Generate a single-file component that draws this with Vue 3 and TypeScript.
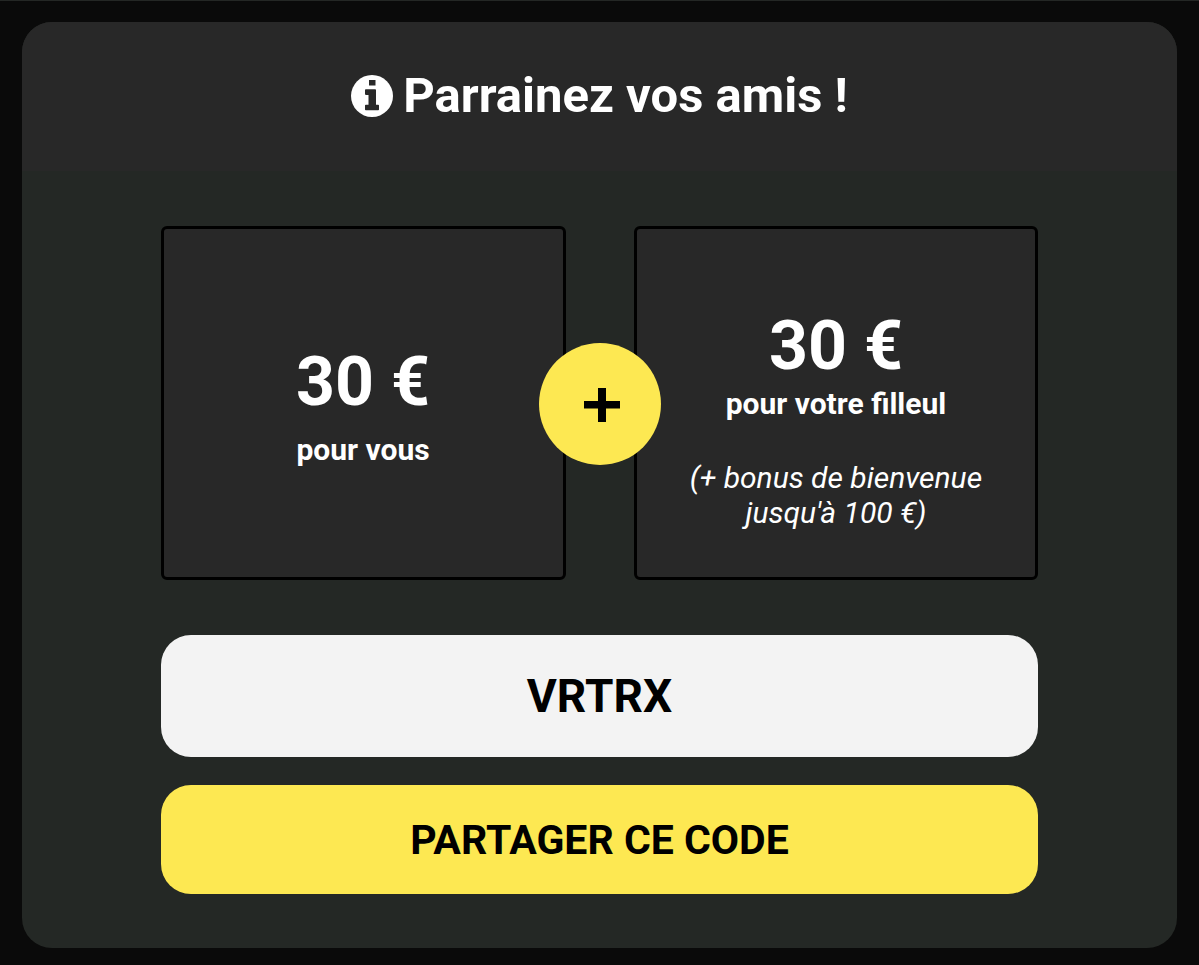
<script setup lang="ts">
import { ref } from 'vue'

const code = ref<string>('VRTRX')
const shared = ref<boolean>(false)

async function shareCode(): Promise<void> {
  if (navigator.share) {
    await navigator.share({ text: code.value }).catch(() => undefined)
    shared.value = true
  }
}
</script>

<template>
  <main class="page">
    <section class="card" aria-labelledby="referral-title">
      <header class="card-header">
        <svg class="info" viewBox="0 0 42 42" aria-hidden="true">
          <circle cx="21" cy="21" r="21" fill="#fff" />
          <path
            d="M18 5h6.500v5.500H18zM14.800 14.300h9.400a.8.8 0 0 1 .8.8v14.700h2.200a.8.8 0 0 1 .8.8v3.800a.8.8 0 0 1-.8.8H14.800a.8.8 0 0 1-.8-.8v-3.800a.8.8 0 0 1 .8-.8h2.700v-9.900h-2.700a.8.8 0 0 1-.8-.8v-4a.8.8 0 0 1 .8-.8z"
            fill="#282828"
          />
        </svg>
        <h1 id="referral-title">Parrainez vos amis !</h1>
      </header>

      <div class="card-body">
        <div class="rewards">
          <article class="reward reward-self">
            <p class="amount">30 €</p>
            <p class="who">pour vous</p>
          </article>
          <article class="reward reward-friend">
            <p class="amount">30 €</p>
            <p class="who">pour votre filleul</p>
            <p class="bonus">(+ bonus de bienvenue jusqu'à 100 €)</p>
          </article>
          <div class="plus">
            <svg viewBox="0 0 122 122" role="img" aria-label="plus">
              <path d="M59 45h8v13h14v7.500H67V79h-8V65.500H45V58h14z" fill="#000" />
            </svg>
          </div>
        </div>

        <input class="code" type="text" :value="code" readonly aria-label="Code de parrainage" />
        <button class="share" type="button" @click="shareCode">PARTAGER CE CODE</button>
      </div>
    </section>
  </main>
</template>

<style>
body {
  background: #0a0a0a;
}
</style>

<style scoped>
.page {
  box-sizing: border-box;
  padding: 21px 22px 17px;
  border-top: 1px solid #242725;
  color: #fff;
  font-family: Roboto, "Liberation Sans", sans-serif;
}

.card {
  overflow: hidden;
  border-radius: 30px;
  background: #242825;
}

.card-header {
  display: flex;
  align-items: center;
  justify-content: center;
  gap: 10px;
  padding: 45px 24px 46px;
  background: #282828;
}

.info {
  width: 42px;
  height: 42px;
}

h1 {
  margin: 0;
  font-size: 49px;
  font-weight: 700;
  line-height: 58px;
}

.card-body {
  display: flex;
  flex-direction: column;
  padding: 55px 12% 54px;
}

.rewards {
  position: relative;
  display: grid;
  grid-template-columns: 1fr 1fr;
  gap: 68px;
  margin-bottom: 55px;
}

.reward {
  display: flex;
  flex-direction: column;
  align-items: center;
  box-sizing: border-box;
  min-height: 354px;
  padding: 0 44px;
  border: 3px solid #000;
  border-radius: 6px;
  background: #282828;
  text-align: center;
}

.reward-self {
  padding-top: 114px;
}

.reward-self .who {
  margin-top: 10px;
}

.reward-friend {
  padding-top: 78px;
}

.reward p {
  margin-bottom: 0;
}

.amount {
  margin-top: 0;
  font-size: 68px;
  font-weight: 700;
  line-height: 79px;
}

.who {
  margin-top: 0;
  font-size: 30px;
  font-weight: 700;
  line-height: 35px;
}

.bonus {
  margin-top: 39px;
  font-size: 30px;
  font-style: italic;
  line-height: 35px;
}

.plus {
  position: absolute;
  top: calc(50% + 1px);
  left: 50%;
  width: 122px;
  height: 122px;
  border-radius: 50%;
  background: #fde852;
  transform: translate(-50%, -50%);
}

.plus svg {
  display: block;
  width: 100%;
}

.code,
.share {
  box-sizing: border-box;
  width: 100%;
  margin: 0;
  border: 0;
  border-radius: 30px;
  color: #000;
  font-family: inherit;
  font-weight: 700;
  text-align: center;
}

.code {
  padding: 34px 24px;
  background: #f3f3f3;
  font-size: 46px;
  line-height: 54px;
}

.share {
  margin-top: 28px;
  padding: 30px 24px 29px;
  background: #fde852;
  font-size: 41px;
  line-height: 50px;
  cursor: pointer;
}
</style>
